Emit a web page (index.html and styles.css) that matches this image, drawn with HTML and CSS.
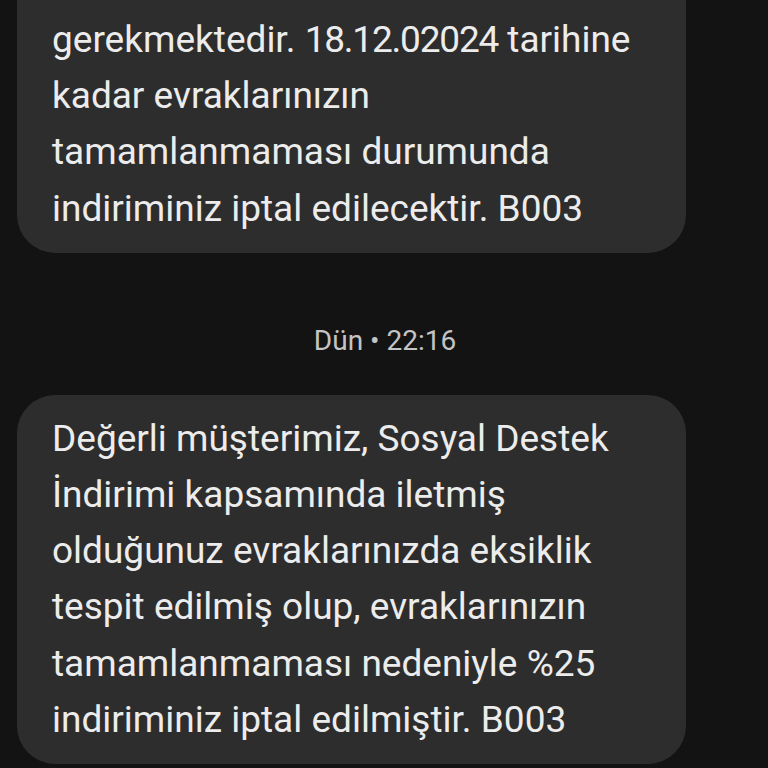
FILE: index.html
```html
<!DOCTYPE html>
<html lang="tr">
<head>
<meta charset="utf-8">
<link rel="stylesheet" href="styles.css">
</head>
<body>
<main class="thread">
  <div class="bubble bubble-cut">
    <p class="msg">gerekmektedir. <span class="num">18.12.02024</span> tarihine<br>kadar evraklarınızın<br>tamamlanmaması durumunda<br>indiriminiz iptal edilecektir. B003</p>
  </div>
  <div class="stamp">Dün • 22:16</div>
  <div class="bubble">
    <p class="msg">Değerli müşterimiz, Sosyal Destek<br>İndirimi kapsamında iletmiş<br>olduğunuz evraklarınızda eksiklik<br>tespit edilmiş olup, evraklarınızın<br>tamamlanmaması nedeniyle %25<br>indiriminiz iptal edilmiştir. B003</p>
  </div>
</main>
</body>
</html>
```

FILE: styles.css
```css
html, body {
  margin: 0;
  padding: 0;
  background: #131313;
  height: 768px;
  overflow: hidden;
}
.thread {
  display: flex;
  flex-direction: column;
  padding: 0 82px 0 17px;
  font-family: Roboto, "Noto Sans", sans-serif;
}
.bubble {
  background: #2d2d2d;
  border-radius: 38px;
  padding: 16px 35px;
}
.bubble-cut {
  border-top-left-radius: 0;
  border-top-right-radius: 0;
  padding-top: 12px;
  padding-bottom: 16px;
}
.msg {
  margin: 0;
  color: #ececec;
  font-size: 37px;
  line-height: 56.2px;
  white-space: nowrap;
}
.num {
  letter-spacing: -1.2px;
}
.stamp {
  margin: 70px 0 36px;
  text-align: center;
  color: #c4c4c4;
  font-size: 28px;
  line-height: 36px;
  padding-left: 67px;
}
```
